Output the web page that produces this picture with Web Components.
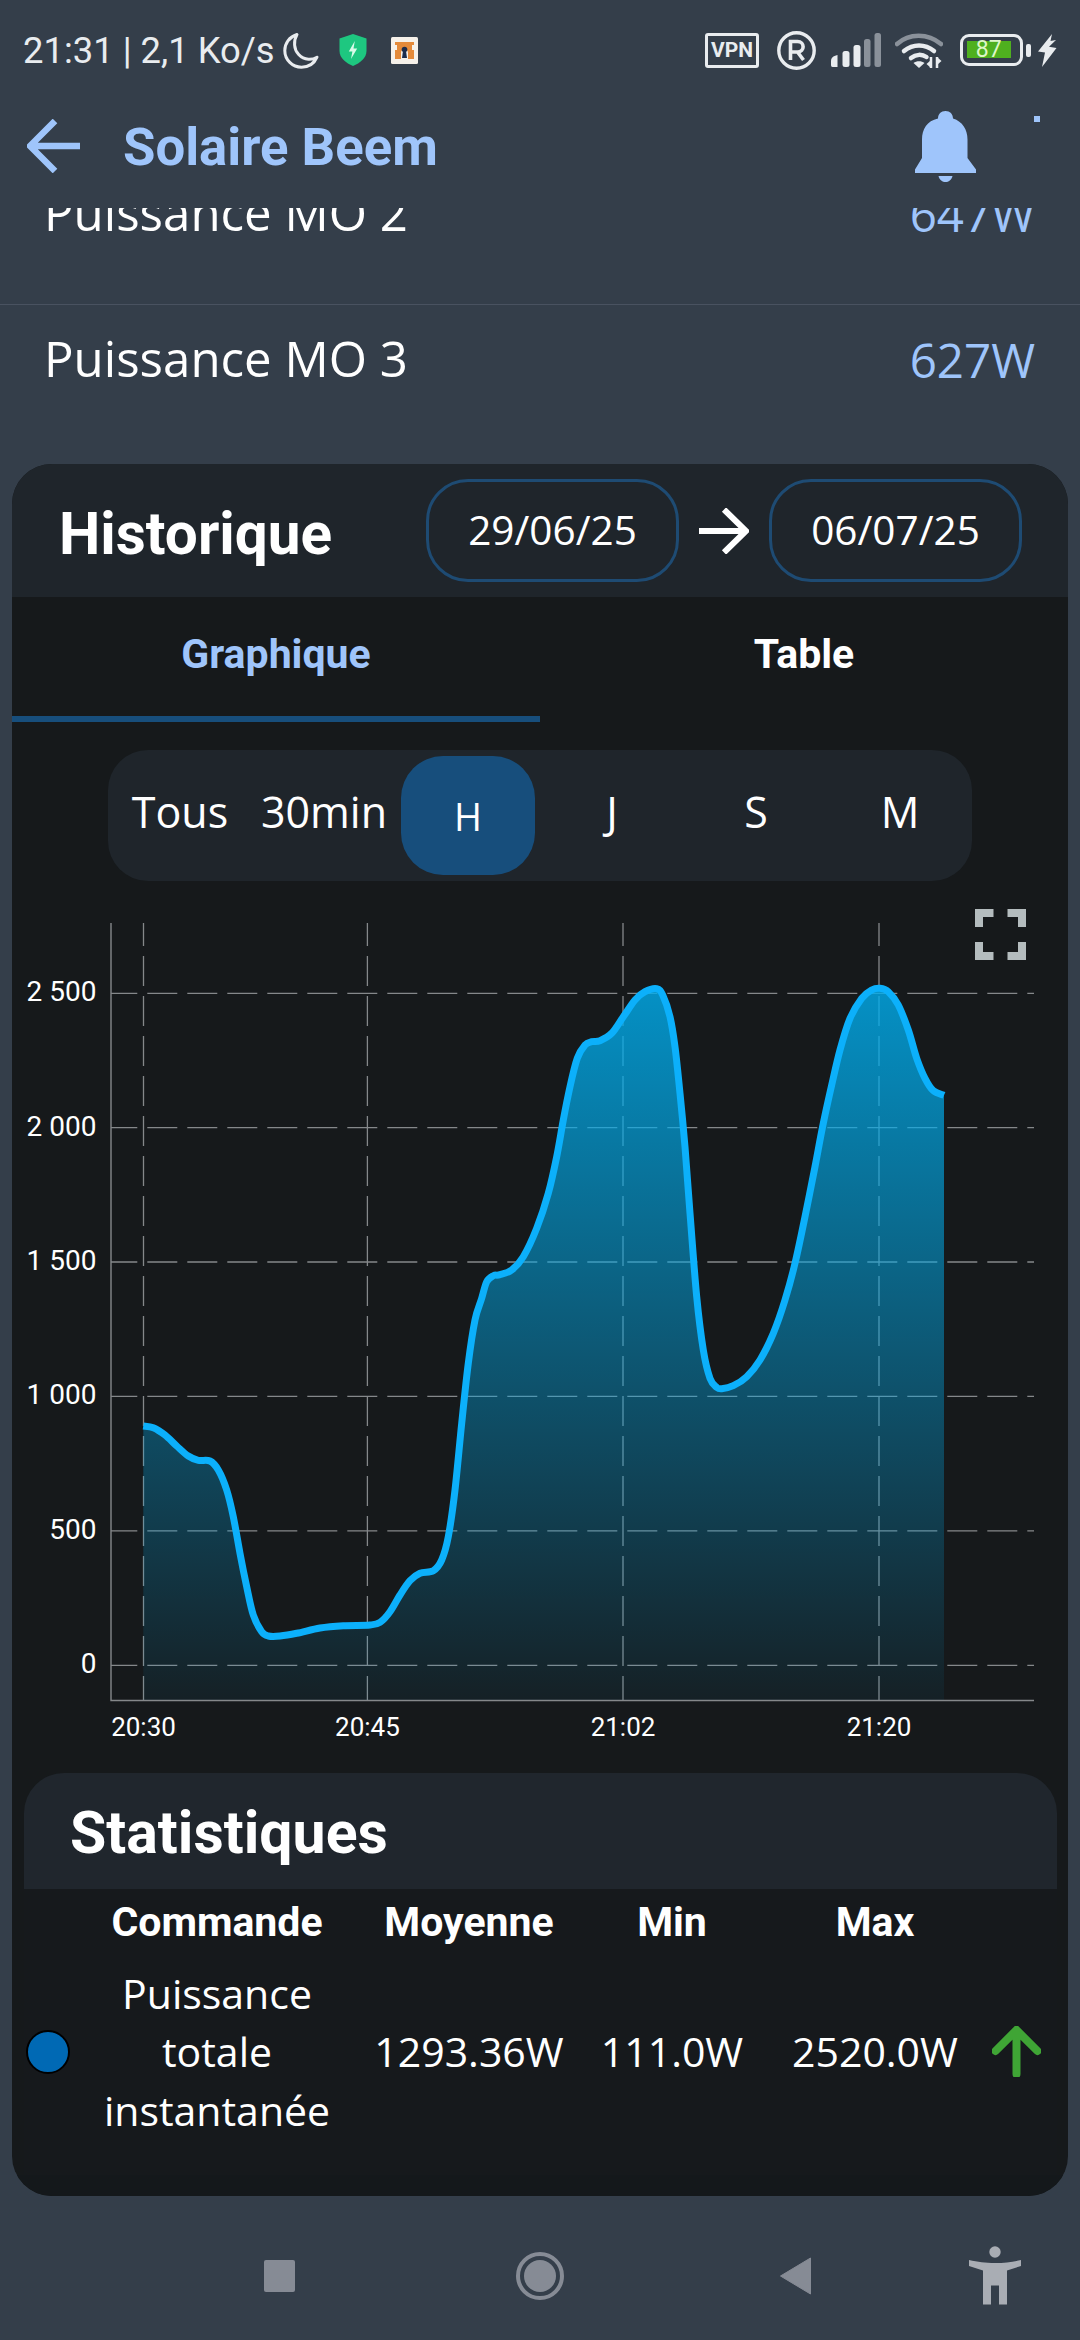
<!DOCTYPE html>
<html lang="fr">
<head>
<meta charset="utf-8">
<title>Solaire Beem</title>
<style>
  html, body { margin: 0; padding: 0; background: #343e4a; }
</style>
</head>
<body>
<solar-app>
  <status-bar slot="status">21:31 | 2,1 Ko/s</status-bar>
  <top-bar slot="top">Solaire Beem</top-bar>

  <data-row class="first"><span slot="label">Puissance MO 2</span><span slot="value">647W</span></data-row>
  <data-row><span slot="label">Puissance MO 3</span><span slot="value">627W</span></data-row>

  <history-card>
    <span slot="title">Historique</span>
    <date-pill slot="from">29/06/25</date-pill>
    <date-pill slot="to">06/07/25</date-pill>
    <tab-bar slot="tabs"></tab-bar>
    <range-picker slot="ranges"></range-picker>
    <power-chart slot="chart"></power-chart>
    <stats-card slot="stats"></stats-card>
  </history-card>

  <nav-bar slot="nav"></nav-bar>
</solar-app>

<script>
const make = (name, html) => {
  const template = document.createElement('template');
  template.innerHTML = html;
  customElements.define(name, class extends HTMLElement {
    constructor() {
      super();
      this.attachShadow({ mode: 'open' }).appendChild(template.content.cloneNode(true));
    }
  });
};

make('solar-app', `
<style>
  :host { display: flex; flex-direction: column; width: 1080px; height: 2340px; overflow: hidden; background: #343e4a; color: #fff; font-family: "Open Sans", sans-serif; }
  .scroll { height: 1988px; overflow: hidden; }
</style>
<slot name="status"></slot>
<slot name="top"></slot>
<div class="scroll"><slot></slot></div>
<slot name="nav"></slot>
`);

make('status-bar', `
<style>
  :host { display: flex; align-items: center; height: 100px; padding: 0 23px 0 23px; box-sizing: border-box; color: #e9ecef; font: 400 36.400px Roboto, sans-serif; }
  .left, .right { display: flex; align-items: center; }
  .right { margin-left: auto; }
  svg { display: block; flex: none; }
  .vpn { box-sizing: border-box; width: 54px; height: 35px; border: 3.500px solid #e9ecef; border-radius: 3px; font: 700 21px/28px Roboto, sans-serif; text-align: center; }
  .batt { position: relative; box-sizing: border-box; width: 63px; height: 32px; border: 3.500px solid #e9ecef; border-radius: 9px; margin-left: 17px; padding: 4px 9px 4px 3.500px; }
  .batt b { display: block; height: 17px; background: #4fb01f; color: #dff7c8; font: 400 23px/18px Roboto, sans-serif; text-align: center; }
</style>
<div class="left">
  <slot></slot>
  <svg width="36" height="37" viewBox="0 0 36 37" style="margin-left:8px"><path d="M14 2.500C6 5 1.800 11.500 1.800 18.500 1.800 28 9.500 35.200 18.500 35.200c7 0 12.800-3.800 15.500-10-2.600 1.600-5.600 2.300-8.600 2.100C17.500 26.800 12 20 11.600 13 11.300 9 12.200 5.500 14 2.500Z" fill="none" stroke="#e9ecef" stroke-width="3" stroke-linejoin="round"/></svg>
  <svg width="28" height="32" viewBox="0 0 28 32" style="margin-left:20px"><path d="M14 0 27.500 4.500V17C27.500 24 21 29 14 32 7 29 .5 24 .5 17V4.500Z" fill="#1ec780"/><path d="M15.800 7 9.800 17.500h3.600L12 25l6.200-10.500h-3.700Z" fill="#d9fbe9"/></svg>
  <svg width="27" height="27" viewBox="0 0 27 27" style="margin-left:24px"><rect width="27" height="27" rx="1.500" fill="#f6f1ea"/><path d="M4 5h19v3H21v5h2v9h-6v-6c0-5-7-5-7 0v6H4v-9h2V8H4Z" fill="#e48a3a"/><circle cx="13.500" cy="12.500" r="2.800" fill="#1c2c4c"/><path d="M12 14h3l1 7h-5Z" fill="#1c2c4c"/></svg>
</div>
<div class="right">
  <div class="vpn">VPN</div>
  <svg width="39" height="39" viewBox="0 0 39 39" style="margin-left:18px"><circle cx="19.500" cy="19.500" r="17.700" fill="none" stroke="#e9ecef" stroke-width="3.400"/><path d="M13.500 29V10.500h7c7.500 0 7.500 10.500 0 10.500h-7M20.500 21l6 8" fill="none" stroke="#e9ecef" stroke-width="3.600"/></svg>
  <svg width="50" height="34" viewBox="0 0 50 34" style="margin-left:15px"><path d="M0 28c0-3 2-5 6.500-6v12H1.500C.5 34 0 33 0 32Z" fill="#e9ecef"/><rect x="11.500" y="18" width="7" height="16" rx="2.500" fill="#e9ecef"/><rect x="22.500" y="12" width="7" height="22" rx="2.500" fill="#e9ecef"/><rect x="33" y="6" width="6.500" height="28" rx="2.500" fill="#8a919a"/><rect x="43.500" y="0" width="6.500" height="34" rx="2.500" fill="#8a919a"/></svg>
  <svg width="48" height="37" viewBox="0 0 48 37" style="margin-left:14px"><path d="M2 12C14 1 33 1 46 12" fill="none" stroke="#8a919a" stroke-width="4.500" stroke-linecap="round"/><path d="M9 19c9-7.500 21-7.500 30 0" fill="none" stroke="#e9ecef" stroke-width="4.500" stroke-linecap="round"/><path d="M16 26c5-4 11-4 15.500-1" fill="none" stroke="#e9ecef" stroke-width="4.500" stroke-linecap="round"/><path d="M24 36 18.500 31c3-2.500 8-2.500 11 0Z" fill="#e9ecef"/><path d="M36 25v11M42 25v11" stroke="#e9ecef" stroke-width="2.500"/><path d="M31.500 32 36 28v8ZM46.500 29 42 25v8Z" fill="#e9ecef"/></svg>
  <div class="batt"><b>87</b></div>
  <svg width="6" height="13" viewBox="0 0 6 13" style="margin-left:3px"><rect width="5" height="13" rx="2" fill="#e9ecef"/></svg>
  <svg width="19" height="33" viewBox="0 0 19 33" style="margin-left:6px"><path d="M14 0 0 17.500l7 1L4 33l14.500-19-7.500-1.200 7-6.800-5.500 1Z" fill="#e9ecef"/></svg>
</div>
`);

make('top-bar', `
<style>
  :host { display: flex; align-items: center; height: 108px; padding: 0 40px 16px 27px; box-sizing: border-box; color: #9fc5fb; font: 700 52.700px Roboto, sans-serif; }
  .title { margin-left: 43px; position: relative; top: 1px; }
  svg { display: block; flex: none; }
  .bell { margin-left: auto; }
  .dot { align-self: flex-start; width: 6px; height: 6px; margin: 16px 0 0 58px; background: #9fc5fb; }
</style>
<svg width="53" height="54" viewBox="0 0 53 54"><path d="M53 27H3M28 2 3 27l25 25" fill="none" stroke="#9fc5fb" stroke-width="6.500"/></svg>
<div class="title"><slot></slot></div>
<svg class="bell" width="61" height="71" viewBox="0 0 61 71"><path d="M30.500 0c4.500 0 7.500 3 7.500 7.500 9.500 3 14.500 11 14.500 21V47L61 58.500V62H0v-3.500L7 47V28.500c0-10.500 5-18.500 16-21C23 3 26 0 30.500 0Z" fill="#9fc5fb"/><path d="M23.500 65h14c-1 4-4 6-7 6s-6-2-7-6Z" fill="#9fc5fb"/></svg>
<div class="dot"></div>
`);

make('data-row', `
<style>
  :host { display: flex; justify-content: space-between; height: 146px; padding: 19.500px 45px 0 44px; box-sizing: border-box; font-size: 49.200px; line-height: 66px; border-bottom: 1.500px solid #495260; }
  :host(.first) { margin-top: -49px; }
  :host(:not(.first)) { border-bottom: 0; height: 146px; }
  .value { color: #9fc5fb; position: relative; top: 2px; font-size: 47.500px; }
</style>
<div><slot name="label"></slot></div>
<div class="value"><slot name="value"></slot></div>
`);

make('history-card', `
<style>
  :host { display: block; margin: 13px 12px 0; height: 1732px; border-radius: 40px; overflow: hidden; background: #16191b; }
  .wrap { display: flex; flex-direction: column; height: 100%; }
  .head { display: flex; align-items: center; height: 133px; flex: none; padding: 0 46px 0 47px; box-sizing: border-box; background: #1f252b; }
  .title { font: 700 58.500px Roboto, sans-serif; position: relative; top: 3px; margin-right: auto; }
  svg { display: block; margin: 0 20px 0 20px; }
  .foot { margin-top: auto; height: 24px; background: #14181b; }
</style>
<div class="wrap">
  <div class="head">
    <div class="title"><slot name="title"></slot></div>
    <slot name="from"></slot>
    <svg width="50" height="46" viewBox="0 0 50 46"><path d="M0 23h46M25 1.500 47 23 25 44.500" fill="none" stroke="#fff" stroke-width="6"/></svg>
    <slot name="to"></slot>
  </div>
  <slot name="tabs"></slot>
  <slot name="ranges"></slot>
  <slot name="chart"></slot>
  <slot name="stats"></slot>
  <div class="foot"></div>
</div>
`);

make('date-pill', `
<style>
  :host { display: flex; align-items: center; justify-content: center; box-sizing: border-box; width: 253px; height: 103px; border: 3px solid #1e4b73; border-radius: 42px; font-size: 40.500px; padding-bottom: 2px; }
</style>
<slot></slot>
`);

make('tab-bar', `
<style>
  :host { display: grid; grid-template-columns: 528px 528px; height: 125px; flex: none; font: 700 41px Roboto, sans-serif; }
  div { display: flex; align-items: center; justify-content: center; padding-bottom: 12px; box-sizing: border-box; }
  .on { color: #9fc5fb; border-bottom: 6px solid #174e7c; padding-bottom: 6px; }
</style>
<div class="on">Graphique</div>
<div>Table</div>
`);

make('range-picker', `
<style>
  :host { display: grid; grid-template-columns: repeat(6, 144px); width: 864px; height: 131px; margin: 28px 0 0 96px; flex: none; background: #1f252b; border-radius: 40px; font-size: 43px; }
  div { display: flex; align-items: center; justify-content: center; padding-bottom: 9px; box-sizing: border-box; }
  .on { margin: 6px 5px; background: #174e7c; border-radius: 42px; font-size: 38px; padding: 0; }
</style>
<div>Tous</div><div>30min</div><div class="on">H</div><div>J</div><div>S</div><div>M</div>
`);

const CURVE = [[143.3,1426],[153.3,1427.7],[165,1435],[176.7,1446],[188.3,1456],[198.3,1460.3],[210,1461],[218.3,1470],[226.7,1490],[233.3,1516.7],[240,1553.3],[246.7,1586.7],[253.3,1615],[261.7,1631.7],[268.3,1636],[280,1636],[296.7,1633.3],[320,1628],[343.3,1625.7],[370,1625],[380,1622.3],[390,1611.7],[400,1595],[410,1580.7],[420,1573.3],[433.3,1570.7],[441.7,1560],[448.3,1536.7],[455,1490],[461.7,1423.3],[468.3,1363.3],[475,1320],[481.7,1298.3],[486.7,1281.7],[493.3,1275.7],[500,1274.7],[511.7,1270],[523.3,1256.7],[536.7,1228.3],[548.3,1193.3],[556.7,1156.7],[563.3,1120],[570,1086.7],[577.3,1058.3],[585,1045],[591.7,1041.7],[600,1040.7],[611.7,1033.3],[623.3,1016.7],[635,1000],[645,991.7],[656.7,988.7],[662.7,995],[670,1016.7],[675,1046.7],[680,1093.3],[685,1146.7],[690,1213.3],[696.7,1296.7],[703.3,1350],[710,1378.3],[716.7,1387.3],[721.7,1388.7],[733.3,1385.7],[746.7,1376.7],[760,1360],[773.3,1333.3],[785,1300],[795,1263.3],[805,1216.7],[815,1166.7],[823.3,1123.3],[831.7,1085],[840,1050],[850,1018.3],[861.7,998.3],[871.7,990],[880,988.3],[888.3,991.7],[898.3,1005],[908.3,1030],[916.7,1058.3],[925,1078.3],[933.3,1090.7],[944,1095.3]];

const smooth = (pts) => {
  let d = `M${pts[0][0]} ${pts[0][1]}`;
  for (let i = 0; i < pts.length - 1; i++) {
    const a = pts[Math.max(i - 1, 0)], b = pts[i], c = pts[i + 1], e = pts[Math.min(i + 2, pts.length - 1)];
    const c1 = [b[0] + (c[0] - a[0]) / 6, b[1] + (c[1] - a[1]) / 6];
    const c2 = [c[0] - (e[0] - b[0]) / 6, c[1] - (e[1] - b[1]) / 6];
    d += `C${c1[0].toFixed(1)} ${c1[1].toFixed(1)} ${c2[0].toFixed(1)} ${c2[1].toFixed(1)} ${c[0]} ${c[1]}`;
  }
  return d;
};

class PowerChart extends HTMLElement {
  constructor() {
    super();
    const yTicks = [['2 500', 993.3], ['2 000', 1127.6], ['1 500', 1262], ['1 000', 1396.4], ['500', 1530.9], ['0', 1665.3]];
    const xTicks = [['20:30', 143.5], ['20:45', 367.4], ['21:02', 623], ['21:20', 879]];
    const line = smooth(CURVE);
    const hGrid = yTicks.map(([t, y]) => `<path class="h" d="M111 ${y}H1034"/><text class="y" x="96.5" y="${y + 8}">${t}</text>`).join('');
    const vGrid = xTicks.map(([t, x]) => `<path class="v" d="M${x} 923V1700"/><text class="x" x="${x}" y="1736">${t}</text>`).join('');
    this.attachShadow({ mode: 'open' }).innerHTML = `
<style>
  :host { display: block; height: 860px; margin-top: 19px; flex: none; }
  svg { display: block; }
  .h, .v { fill: none; stroke: #85888a; stroke-width: 1.300; stroke-dasharray: 30 10; }
  .h { stroke-dashoffset: 3.700; }
  .v { stroke-dashoffset: 7; }
  .axis { fill: none; stroke: #85888a; stroke-width: 1.400; }
  text { fill: #fff; font-family: Roboto, sans-serif; }
  .y { font-size: 28px; text-anchor: end; }
  .x { font-size: 26px; text-anchor: middle; }
</style>
<svg width="1056" height="860" viewBox="12 900 1056 860">
  <defs>
    <linearGradient id="fill" gradientUnits="userSpaceOnUse" x1="0" y1="987" x2="0" y2="1700">
      <stop offset="0" stop-color="#00aff0" stop-opacity=".8"/>
      <stop offset="1" stop-color="#00aff0" stop-opacity=".05"/>
    </linearGradient>
  </defs>
  ${hGrid}${vGrid}
  <path class="axis" d="M111 923V1700.500H1034"/>
  <path d="${line}L944 1700L143.3 1700Z" fill="url(#fill)"/>
  <path d="${line}" fill="none" stroke="#0cb0fb" stroke-width="7" stroke-linejoin="round"/>
  <path d="M979 927V913H993.500M1007.500 913H1022V927M979 942V956H993.500M1007.500 956H1022V942" fill="none" stroke="#b4bcbe" stroke-width="8"/>
</svg>`;
  }
}
customElements.define('power-chart', PowerChart);

make('stats-card', `
<style>
  :host { display: block; width: 1033px; margin: 13px 0 0 12px; flex: none; }
  .head { height: 116px; padding: 0 0 0 46px; box-sizing: border-box; background: #20262d; border-radius: 40px 40px 0 0; font: 700 59px/120px Roboto, sans-serif; }
  .grid { display: grid; grid-template-columns: 62px 262px 242px 164px 242px 61px; background: #16191c; padding-bottom: 28px; }
  .th { height: 71px; font: 700 41px/66px Roboto, sans-serif; text-align: center; }
  .td { display: flex; align-items: center; justify-content: center; height: 183px; font-size: 41px; line-height: 58.500px; text-align: center; }
  .cmd { padding-bottom: 4px; }
  .dot { justify-content: flex-start; }
  .dot i { display: block; width: 44px; height: 44px; box-sizing: border-box; margin-left: 1.500px; border: 2.500px solid #000; border-radius: 50%; background: #0069b4; }
  .up { justify-content: flex-start; }
  svg { display: block; margin-left: -4px; }
</style>
<div class="head">Statistiques</div>
<div class="grid">
  <div class="th"></div><div class="th">Commande</div><div class="th">Moyenne</div><div class="th">Min</div><div class="th">Max</div><div class="th"></div>
  <div class="td dot"><i></i></div>
  <div class="td cmd">Puissance<br>totale<br>instantanée</div>
  <div class="td">1293.36W</div>
  <div class="td">111.0W</div>
  <div class="td">2520.0W</div>
  <div class="td up"><svg width="49" height="51" viewBox="0 0 49 51"><path d="M24.500 48V5M3.500 25 24.500 4 45.500 25" fill="none" stroke="#3fa535" stroke-width="8" stroke-linecap="round"/></svg></div>
</div>
`);

make('nav-bar', `
<style>
  :host { display: flex; height: 144px; flex: none; }
  svg { display: block; }
</style>
<svg width="1080" height="144" viewBox="0 2196 1080 144">
  <rect x="264" y="2260" width="31" height="32" rx="2" fill="#868b95"/>
  <circle cx="540" cy="2276" r="22" fill="none" stroke="#868b95" stroke-width="4"/>
  <circle cx="540" cy="2276" r="16" fill="#868b95"/>
  <path d="M810.500 2258v36l-30-18Z" fill="#868b95" stroke="#868b95" stroke-width="1" stroke-linejoin="round"/>
  <circle cx="995" cy="2252" r="5.700" fill="#a9adb4"/>
  <path d="M969 2260c9 2 16 3 26 3s17-1 26-3v6l-14 4.500v34h-8v-19h-8v19h-8v-34L969 2266Z" fill="#a9adb4"/>
</svg>
`);
</script>
</body>
</html>
